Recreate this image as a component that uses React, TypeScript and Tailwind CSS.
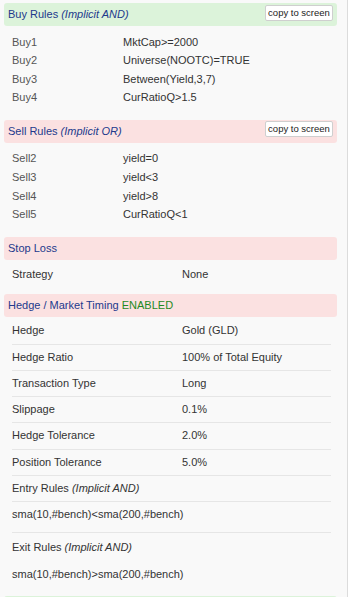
import type { ReactNode } from "react";

const buyRules = [
  ["Buy1", "MktCap>=2000"],
  ["Buy2", "Universe(NOOTC)=TRUE"],
  ["Buy3", "Between(Yield,3,7)"],
  ["Buy4", "CurRatioQ>1.5"],
];

const sellRules = [
  ["Sell2", "yield=0"],
  ["Sell3", "yield<3"],
  ["Sell4", "yield>8"],
  ["Sell5", "CurRatioQ<1"],
];

const hedgeRows = [
  ["Hedge", "Gold (GLD)"],
  ["Hedge Ratio", "100% of Total Equity"],
  ["Transaction Type", "Long"],
  ["Slippage", "0.1%"],
  ["Hedge Tolerance", "2.0%"],
  ["Position Tolerance", "5.0%"],
];

function Heading({
  tone,
  children,
  copy,
}: {
  tone: "green" | "red";
  children: ReactNode;
  copy?: boolean;
}) {
  return (
    <div
      className={`flex h-[23px] items-start justify-between rounded-[3px] pl-1 pr-1 ${
        tone === "green" ? "bg-[#dcf3da]" : "bg-[#fbe1e1]"
      }`}
    >
      <p className="leading-[23px] text-[#22398c]">{children}</p>
      {copy && (
        <button className="mt-[1.5px] h-[16px] w-[68px] rounded-[2px] border border-[#cfcfcf] bg-white text-[9.5px] leading-[14px] text-[#222]">
          copy to screen
        </button>
      )}
    </div>
  );
}

function RuleList({ rows }: { rows: string[][] }) {
  return (
    <div className="mb-[13px] px-2 pt-[6.5px]">
      {rows.map(([k, v]) => (
        <div key={k} className="flex h-[18.6px] leading-[18.6px]">
          <span className="w-[111px] text-[#555]">{k}</span>
          <span className="text-[#333]">{v}</span>
        </div>
      ))}
    </div>
  );
}

export default function App() {
  return (
    <div className="min-h-screen bg-white">
      <div className="h-[597px] w-[348px] overflow-hidden border-r border-[#dcdcdc] bg-[#f9f9f9] pl-1 pr-[10px] pt-[3px] font-['Liberation_Sans','Helvetica',sans-serif] text-[11px]">
        {/* Buy */}
        <Heading tone="green" copy>
          Buy Rules <i>(Implicit AND)</i>
        </Heading>
        <RuleList rows={buyRules} />

        {/* Sell */}
        <Heading tone="red" copy>
          Sell Rules <i>(Implicit OR)</i>
        </Heading>
        <RuleList rows={sellRules} />

        {/* Stop loss */}
        <Heading tone="red">Stop Loss</Heading>
        <div className="mb-[7.5px] mt-[2px] flex h-[25px] px-2 leading-[25px] text-[#333]">
          <span className="w-[170px]">Strategy</span>
          <span>None</span>
        </div>

        {/* Hedge */}
        <Heading tone="red">
          Hedge / Market Timing <span className="text-[#1f8a1f]">ENABLED</span>
        </Heading>
        <div className="mx-2 mr-[6px] mt-[1px] text-[#333]">
          {hedgeRows.map(([k, v]) => (
            <div
              key={k}
              className="flex h-[26.3px] border-b border-[#e6e6e6] leading-[25.3px]"
            >
              <span className="w-[170px]">{k}</span>
              <span>{v}</span>
            </div>
          ))}
          <div className="h-[26.3px] border-b border-[#e6e6e6] leading-[25.3px]">
            Entry Rules <i>(Implicit AND)</i>
          </div>
          <div className="h-[31px] border-b border-[#e6e6e6] pt-[6px] leading-[13px]">
            sma(10,#bench)&lt;sma(200,#bench)
          </div>
          <div className="h-[28px] leading-[28px]">
            Exit Rules <i>(Implicit AND)</i>
          </div>
          <div className="h-[26px] leading-[26px]">
            sma(10,#bench)&gt;sma(200,#bench)
          </div>
        </div>
        <div className="mt-[9px] h-[23px] rounded-[3px] bg-[#dcf3da]" />
      </div>
    </div>
  );
}
